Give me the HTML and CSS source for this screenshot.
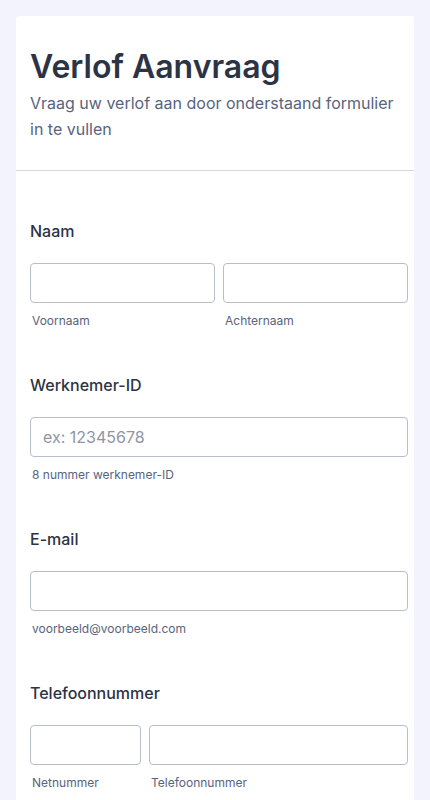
FILE: index.html
```html
<!DOCTYPE html>
<html>
<head>
    <meta charset="utf-8">
    <meta name="viewport" content="width=device-width, initial-scale=1">
    <title>Verlof Aanvraag</title>
    <link rel="stylesheet" href="styles.css">
</head>
<body>
    <div class="card">
        <div class="header">
            <h1 class="title">Verlof Aanvraag</h1>
            <p class="subtitle">Vraag uw verlof aan door onderstaand formulier in te vullen</p>
        </div>

        <form class="form">
            <div class="field">
                <label class="label">Naam</label>
                <div class="row">
                    <div class="col">
                        <input type="text" class="input">
                        <span class="sublabel">Voornaam</span>
                    </div>
                    <div class="col">
                        <input type="text" class="input">
                        <span class="sublabel">Achternaam</span>
                    </div>
                </div>
            </div>

            <div class="field">
                <label class="label">Werknemer-ID</label>
                <input type="text" class="input" placeholder="ex: 12345678">
                <span class="sublabel">8 nummer werknemer-ID</span>
            </div>

            <div class="field">
                <label class="label">E-mail</label>
                <input type="email" class="input">
                <span class="sublabel">voorbeeld@voorbeeld.com</span>
            </div>

            <div class="field">
                <label class="label">Telefoonnummer</label>
                <div class="row">
                    <div class="col col-area">
                        <input type="tel" class="input">
                        <span class="sublabel">Netnummer</span>
                    </div>
                    <div class="col">
                        <input type="tel" class="input">
                        <span class="sublabel">Telefoonnummer</span>
                    </div>
                </div>
            </div>
        </form>
    </div>
</body>
</html>
```

FILE: styles.css
```css
body {
    margin: 0;
    background-color: #f3f3fe;
    font-family: Inter, "Noto Sans", sans-serif;
    color: #2c3345;
}

.card {
    background-color: white;
    margin: 16px 16px 0 16px;
    border-radius: 3px 3px 0 0;
}

.header {
    padding: 31px 6px 28px 14px;
    border-bottom: 1px solid #d8d8e4;
}

.title {
    margin: 0 0 4px 0;
    font-size: 32px;
    font-weight: 600;
    line-height: 39px;
    color: #2c3345;
}

.subtitle {
    margin: 0;
    font-size: 16px;
    line-height: 26px;
    color: #57647e;
}

.form {
    padding: 50px 6px 60px 14px;
}

.field {
    display: flex;
    flex-direction: column;
    margin-bottom: 46px;
}

.label {
    font-size: 16px;
    font-weight: 500;
    line-height: 20px;
    margin-bottom: 22px;
    color: #2c3345;
}

.row {
    display: flex;
    gap: 8px;
}

.col {
    flex: 1;
    display: flex;
    flex-direction: column;
    min-width: 0;
}

.col-area {
    flex: 0 0 111px;
}

.input {
    box-sizing: border-box;
    width: 100%;
    height: 40px;
    border: 1px solid #b8bdc9;
    border-radius: 4px;
    padding: 0 12px;
    font-family: inherit;
    font-size: 16px;
    color: #2c3345;
    background: white;
}

.input::placeholder {
    color: #8f96a3;
}

.sublabel {
    font-size: 12px;
    line-height: 16px;
    margin-top: 10px;
    padding-left: 2px;
    color: #57647e;
}
```
